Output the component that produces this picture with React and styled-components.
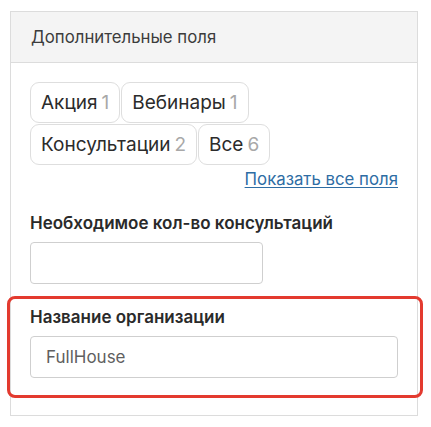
import styled, { createGlobalStyle } from "styled-components";

const GlobalStyle = createGlobalStyle`
  body {
    margin: 0;
    background: #fff;
    font-family: Inter, "Noto Sans", sans-serif;
    color: #333;
  }
`;

const Page = styled.div`
  padding: 11px 13px 12px 10px;
`;

const Card = styled.section`
  border: 1px solid #dcdcdc;
  background: #fff;
`;

const CardHeader = styled.header`
  display: flex;
  align-items: center;
  height: 50px;
  padding: 0 20px;
  background: #f4f4f4;
  border-bottom: 1px solid #dcdcdc;
  font-size: 16.8px;
  color: #3c3c3c;
`;

const CardBody = styled.div`
  display: flex;
  flex-direction: column;
  padding: 19px 19px 37px 19px;
`;

const Chips = styled.div`
  display: flex;
  flex-wrap: wrap;
  gap: 1px;
  max-width: 260px;
`;

const Chip = styled.button`
  display: inline-flex;
  align-items: center;
  gap: 4px;
  height: 41px;
  padding: 0 10px;
  border: 1px solid #dedede;
  border-radius: 9px;
  background: #fff;
  font-family: inherit;
  font-size: 19px;
  color: #2b2b2b;
  cursor: pointer;
`;

const Count = styled.span`
  color: #a8a8a8;
`;

const ShowAll = styled.a`
  align-self: flex-end;
  margin-top: 4px;
  font-size: 16.8px;
  line-height: 20px;
  color: #2e6da4;
  text-decoration: underline;
  text-underline-offset: 2px;
`;

const Field = styled.div`
  position: relative;
  display: flex;
  flex-direction: column;
  gap: 9px;
  margin-top: ${(p) => p.$top}px;

  ${(p) =>
    p.$highlight &&
    `
    &::before {
      content: "";
      position: absolute;
      left: -23px;
      right: -25px;
      top: -11px;
      bottom: -20px;
      border: 3px solid #e33a2f;
      border-radius: 8px;
      pointer-events: none;
    }
  `}
`;

const Label = styled.label`
  font-size: 17px;
  font-weight: 600;
  line-height: 20px;
  color: #2a2a2a;
`;

const Input = styled.input`
  box-sizing: border-box;
  width: ${(p) => p.$width || "100%"};
  height: 42px;
  padding: 0 15px;
  border: 1px solid #cfcfcf;
  border-radius: 4px;
  font-family: inherit;
  font-size: 17px;
  color: #5f5f5f;
  outline: none;
`;

const chips = [
  { name: "Акция", count: 1 },
  { name: "Вебинары", count: 1 },
  { name: "Консультации", count: 2 },
  { name: "Все", count: 6 },
];

export default function App() {
  return (
    <>
      <GlobalStyle />
      <Page>
        <Card>
          <CardHeader>Дополнительные поля</CardHeader>
          <CardBody>
            <Chips>
              {chips.map((c) => (
                <Chip key={c.name}>
                  {c.name}
                  <Count>{c.count}</Count>
                </Chip>
              ))}
            </Chips>
            <ShowAll href="#">Показать все поля</ShowAll>
            <Field $top={24}>
              <Label>Необходимое кол-во консультаций</Label>
              <Input $width="233px" defaultValue="" />
            </Field>
            <Field $top={23} $highlight>
              <Label>Название организации</Label>
              <Input defaultValue="FullHouse" />
            </Field>
          </CardBody>
        </Card>
      </Page>
    </>
  );
}
